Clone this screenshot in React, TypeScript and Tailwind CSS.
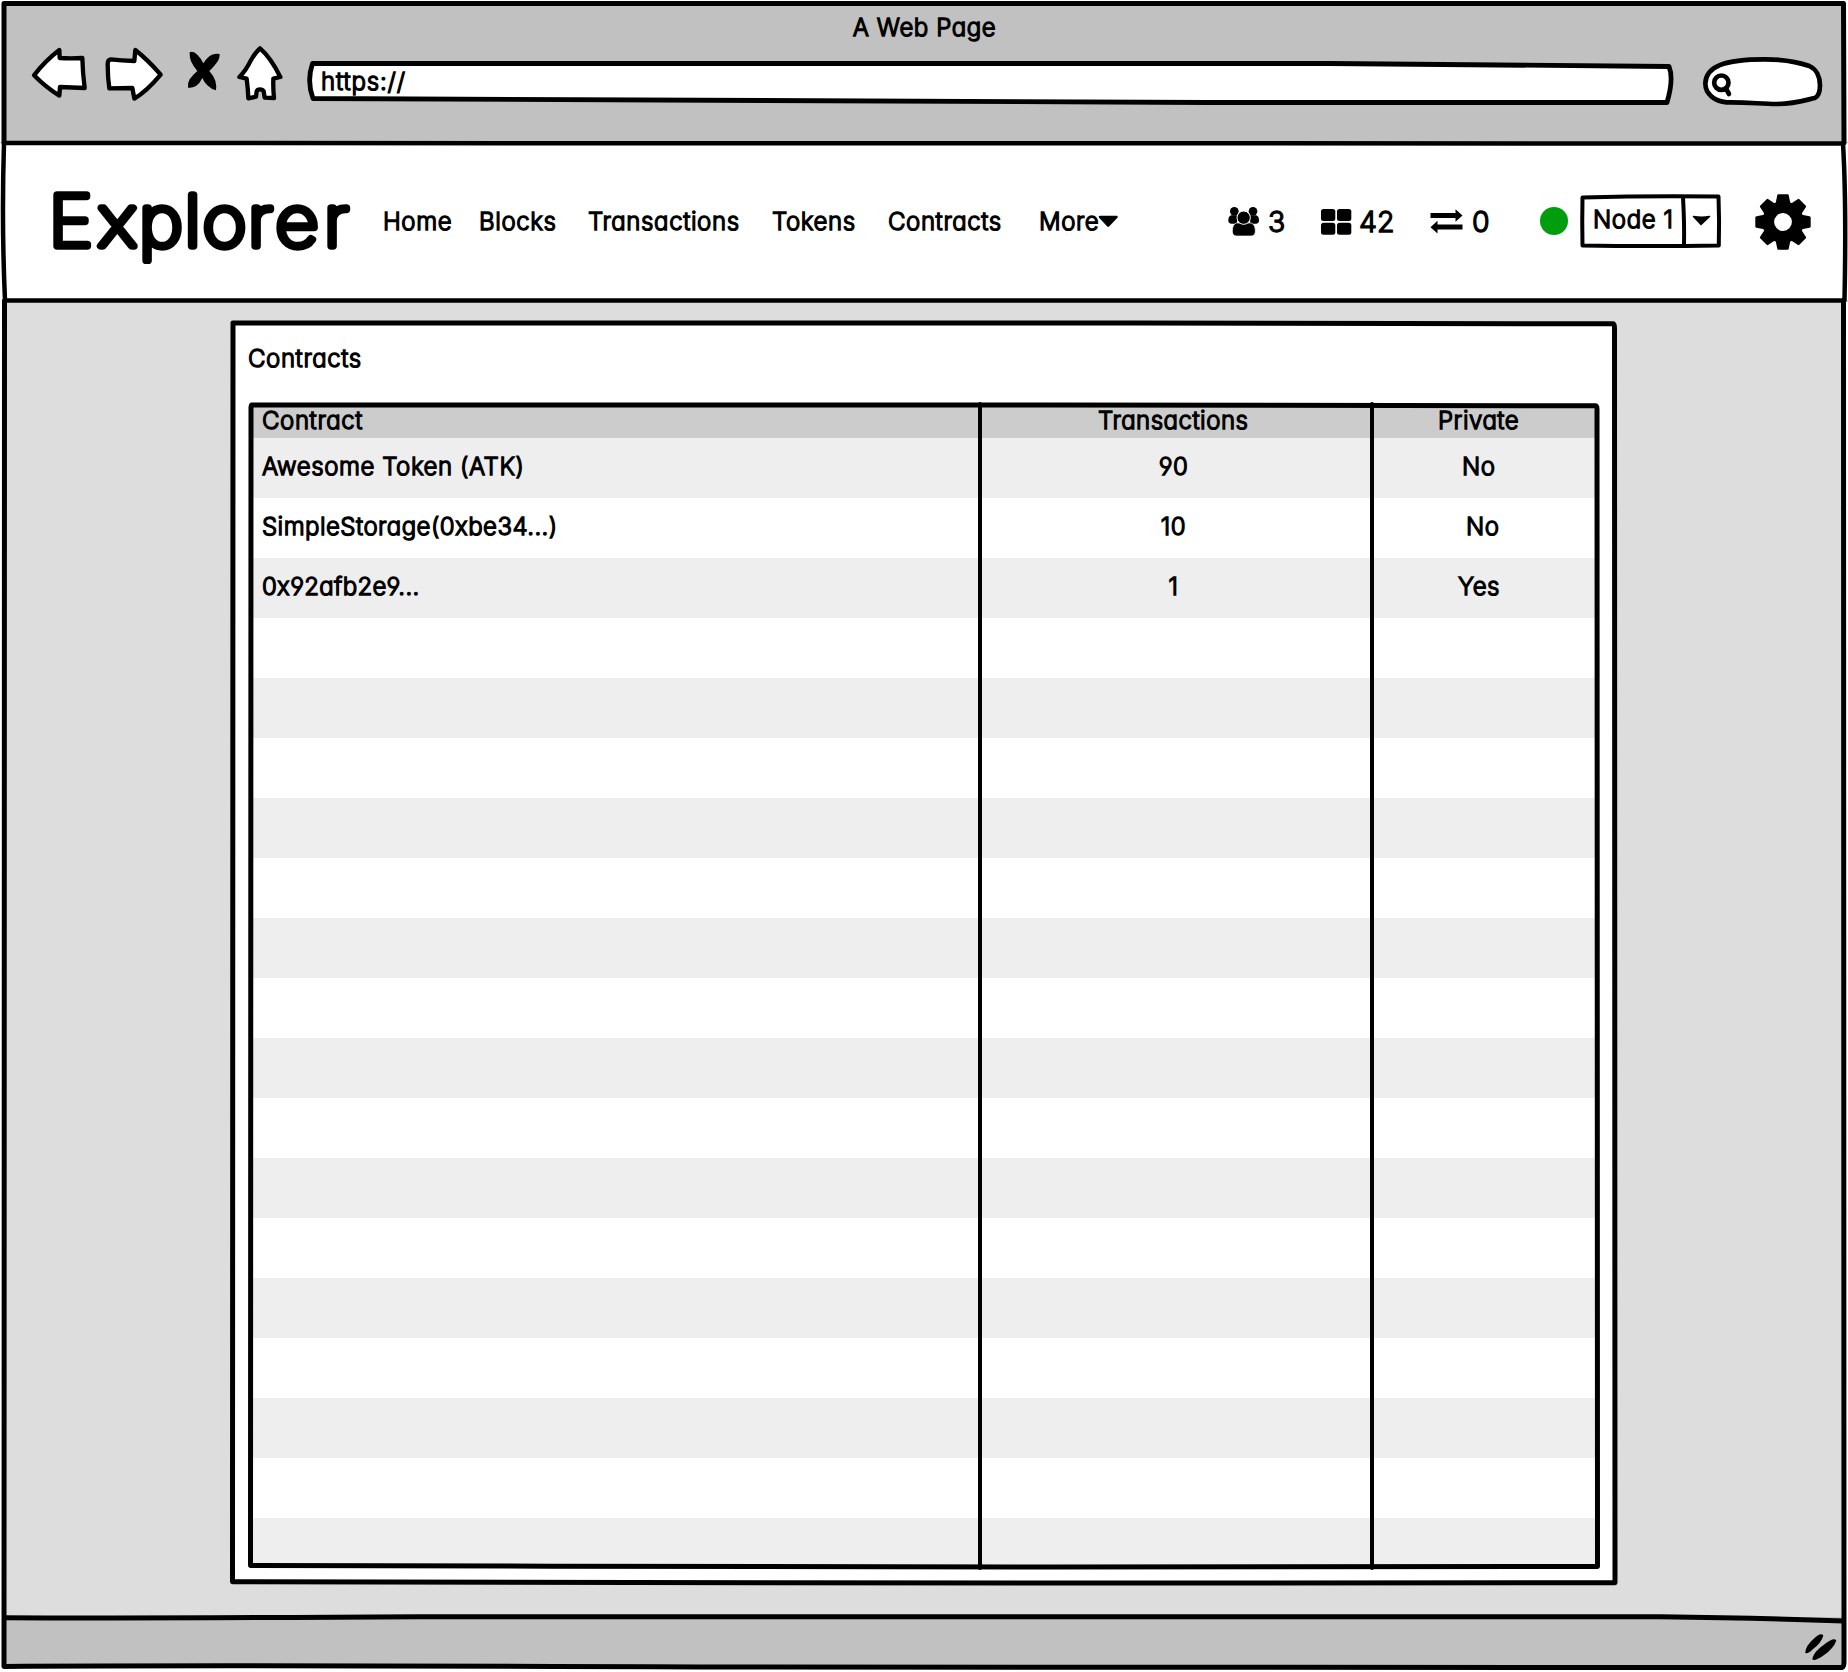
import type { ReactNode } from "react";

/** Hand-drawn line art that overlays the element it is placed in. */
function Sketch({ w, h, children }: { w: number; h: number; children: ReactNode }) {
  return (
    <svg
      className="pointer-events-none absolute top-0 left-0 overflow-visible"
      width={w}
      height={h}
      viewBox={`0 0 ${w} ${h}`}
      fill="none"
      stroke="#000"
      strokeWidth="5"
      strokeLinejoin="round"
      strokeLinecap="round"
    >
      {children}
    </svg>
  );
}

function BackIcon() {
  return (
    <svg className="ml-[30px] mt-[46px] shrink-0" width="58" height="54" viewBox="90 138 174 162" fill="#fff" stroke="#000" strokeWidth="13" strokeLinejoin="round">
      <path d="M102 226Q136 182 178 150L179 174Q212 176 247 174Q248 218 254 264L180 261L178 287Q140 264 102 226Z" />
    </svg>
  );
}

function ForwardIcon() {
  return (
    <svg className="ml-[16px] mt-[46px] shrink-0" width="60" height="56" viewBox="312 138 180 168" fill="#fff" stroke="#000" strokeWidth="13" strokeLinejoin="round">
      <path d="M482 224Q446 182 406 150L403 183Q364 182 332 178Q323 179 323 192Q323 232 328 265L397 264L403 296Q440 274 482 224Z" />
    </svg>
  );
}

function StopIcon() {
  return (
    <svg className="ml-[23px] mt-[50px] shrink-0" width="34" height="42" viewBox="561 150 102 126">
      <path
        d="M569 157Q580 152 592 164Q604 176 610 190Q622 170 636 164Q648 160 659 162Q659 178 649 190Q638 204 628 213Q641 228 646 242Q650 256 648 271Q634 268 622 256Q612 246 607 234Q600 250 588 258Q576 265 564 263Q562 250 569 238Q579 224 592 213Q579 198 573 184Q568 170 569 157Z"
        fill="#000"
      />
    </svg>
  );
}

function HomeIcon() {
  return (
    <svg className="ml-[14px] mt-[44px] shrink-0" width="50" height="58" viewBox="705 132 150 174" fill="#fff" stroke="#000" strokeWidth="13" strokeLinejoin="round">
      <path d="M780 145Q812 172 841 231L820 236Q819 266 822 294L794 293L791 274Q788 268 780 268Q772 268 770 274L768 290L745 295Q744 266 740 236L718 231Q738 212 752 182Q764 160 780 145Z" />
    </svg>
  );
}

function AddressBar() {
  return (
    <div className="relative ml-[23px] mt-[61px] h-[44px] w-[1366px] shrink-0">
      <Sketch w={1366} h={44}>
        <path d="M4.500 2.500L1022 2.500L1361 5.500Q1366 18 1359 41.500L900 41.500L5 37.500Q-1.500 20 4.500 2.500Z" fill="#fff" strokeWidth="4.800" />
      </Sketch>
      <div className="relative pl-[13px] leading-[41px] tracking-[0.85px]">https://</div>
    </div>
  );
}

function SearchBox() {
  return (
    <svg className="ml-[27px] mt-[54px] shrink-0" width="124" height="54" viewBox="1083 162 372 162" fill="#fff" stroke="#000" strokeWidth="14" strokeLinejoin="round" strokeLinecap="round">
      <path d="M1096 250C1098 200 1150 178 1275 178C1340 178 1380 188 1408 198C1430 208 1440 232 1440 256C1440 280 1434 290 1424 294C1390 302 1360 312 1310 312C1260 312 1230 306 1160 307C1125 303 1096 284 1096 250Z" />
      <path d="M1157 264L1167 282" />
      <circle cx="1144" cy="248" r="21.500" />
    </svg>
  );
}

function Chrome() {
  return (
    <header className="flex h-[143px] flex-col bg-[#c1c1c1]">
      <div className="-mb-[53px] h-[53px] pt-[2px] pl-px text-center leading-[51px] tracking-[0.55px]">A Web Page</div>
      <div className="flex">
        <BackIcon />
        <ForwardIcon />
        <StopIcon />
        <HomeIcon />
        <AddressBar />
        <SearchBox />
      </div>
    </header>
  );
}

function UsersIcon() {
  return (
    <svg width="32" height="30" viewBox="83 84 96 90" fill="#000">
      <circle cx="102" cy="97" r="13" />
      <circle cx="158" cy="97" r="13" />
      <path d="M92 109H112L110 134H92Q84 134 84 124Q84 112 92 109Z" />
      <path d="M168 109H148L150 134H168Q176 134 176 124Q176 112 168 109Z" />
      <path d="M108 132H152Q165 136 165 156Q165 171 152 171H109Q96 171 96 156Q96 136 108 132Z" stroke="#fff" strokeWidth="2" />
      <circle cx="130" cy="116" r="20" stroke="#fff" strokeWidth="3" />
    </svg>
  );
}

function BlocksIcon() {
  return (
    <svg width="31" height="26" viewBox="0 0 31 26" fill="#000">
      <rect x="0" y="0" width="14.300" height="12" rx="2.500" />
      <rect x="16" y="0" width="14.300" height="12" rx="2.500" />
      <rect x="0" y="13.800" width="14.300" height="12" rx="2.500" />
      <rect x="16" y="13.800" width="14.300" height="12" rx="2.500" />
    </svg>
  );
}

function TransferIcon() {
  return (
    <svg width="33" height="25" viewBox="0 0 33 25" fill="#000">
      <path d="M0.500 4H25.500V0.200L32.500 6.500L25.500 12.800V9H0.500Z" />
      <path d="M32.500 15.500H7.500V11.800L0.500 18.200L7.500 24.600V20.500H32.500Z" />
    </svg>
  );
}

function GearIcon() {
  const teeth = [0, 45, 90, 135, 180, 225, 270, 315];
  return (
    <svg className="ml-[33px] shrink-0" width="56" height="56" viewBox="-28 -28 56 56">
      <circle r="14.800" fill="none" stroke="#000" strokeWidth="11.800" />
      {teeth.map((a) => (
        <path key={a} d="M-4.600 -27.700H4.600Q5.600 -27.700 5.800 -26.500L7.600 -17.500H-7.600L-5.800 -26.500Q-5.600 -27.700 -4.600 -27.700Z" transform={`rotate(${a})`} />
      ))}
    </svg>
  );
}

function NodeSelect() {
  return (
    <div className="relative ml-[12px] -mt-[2px] flex h-[54px] w-[142px] shrink-0">
      <div className="w-[104px] pl-[13px] leading-[51px] tracking-[0.6px]">Node 1</div>
      <Sketch w={142} h={54}>
        <path d="M2.500 3.500Q70 1.500 138.500 2.500Q139.500 26 138.800 51.500Q70 52.500 2.500 51.500Q2 26 2.500 3.500Z" strokeWidth="4" />
        <path d="M103 3Q104.500 30 104 51" strokeWidth="4" />
        <path d="M113.500 22.500Q122 24 129.500 22.500L121 30.500Z" fill="#000" strokeWidth="1.500" />
      </Sketch>
    </div>
  );
}

function Nav() {
  return (
    <nav className="relative flex h-[157px] items-center bg-white">
      <svg className="ml-[48px] h-[100px] w-[310px] shrink-0 overflow-visible">
        <text
          x="0.6 46.8 84.3 126.3 143.2 185.2 210.6 255.500"
          y="73.800"
          fontSize="69.500"
          fontWeight="100"
          stroke="#000"
          strokeWidth="7.300"
          strokeLinejoin="round"
          transform="scale(1.08 1)"
        >
          Explorer
        </text>
      </svg>
      <div className="flex shrink-0 items-center leading-[30px] tracking-[0.6px]">
        <a className="ml-[25px] w-[96px]">Home</a>
        <a className="w-[109px]">Blocks</a>
        <a className="w-[184px]">Transactions</a>
        <a className="w-[116px]">Tokens</a>
        <a className="w-[151px]">Contracts</a>
        <a className="flex w-[189px] items-center">
          More
          <svg className="-ml-px" width="21" height="13" viewBox="0 0 21 13">
            <path d="M2 2H18.500L10.200 10.700Z" fill="#000" stroke="#000" strokeWidth="2.500" strokeLinejoin="round" />
          </svg>
        </a>
      </div>
      <div className="flex shrink-0 items-center text-[28.500px] leading-[30px] tracking-[0.2px]">
        <span className="flex w-[93px] items-center gap-[8px]"><UsersIcon />3</span>
        <span className="flex w-[109px] items-center gap-[7px]"><BlocksIcon />42</span>
        <span className="flex w-[110px] items-center gap-[9px]"><TransferIcon />0</span>
      </div>
      <span className="-mt-[2px] size-[28px] shrink-0 rounded-full bg-[#009e0f]" />
      <NodeSelect />
      <GearIcon />
      <Sketch w={1848} h={157}>
        <path d="M4 0Q600 -1 1843 0.500Q1846.500 60 1844.500 157.500Q900 158.500 5 157.500Q1.500 80 4 0Z" strokeWidth="4.500" />
      </Sketch>
    </nav>
  );
}

const rows = [
  { name: "Awesome Token (ATK)", count: "90", secret: "No", spacing: "tracking-[0.55px]", shift: "pl-[90px]" },
  { name: "SimpleStorage(0xbe34...)", count: "10", secret: "No", spacing: "tracking-[0.45px]", shift: "pl-[94px]" },
  { name: "0x92afb2e9...", count: "1", secret: "Yes", spacing: "tracking-[0.3px]", shift: "pl-[86px]" },
];

function ContractsTable() {
  return (
    <div className="relative ml-[18px] mt-[30px] h-[1162px] w-[1346px]">
      <div className="grid h-[33px] grid-cols-[729px_392px_225px] bg-[#ccc] leading-[31px]">
        <div className="pl-[11px] tracking-[0.6px]">Contract</div>
        <div className="pl-[118px]">Transactions</div>
        <div className="pl-[66px]">Private</div>
      </div>
      <div className="h-[1128px] overflow-hidden">
        {Array.from({ length: 19 }, (_, i) => (
          <div
            key={i}
            className="grid h-[60px] grid-cols-[729px_392px_225px] leading-[57px] odd:bg-[#eee] even:bg-white"
          >
            {rows[i] && (
              <>
                <div className={`pl-[11px] ${rows[i].spacing}`}>{rows[i].name}</div>
                <div className="pr-[5px] text-center">{rows[i].count}</div>
                <div className={rows[i].shift}>{rows[i].secret}</div>
              </>
            )}
          </div>
        ))}
      </div>
      <Sketch w={1346} h={1162}>
        <path d="M0.500 0L800 0L1344.500 0.800Q1346 1 1346 4L1346.500 1161.500L800 1162L300 1161.200L-0.500 1160.500L0 2Z" />
        <path d="M729 -1V1163M1121 -1V1163" strokeWidth="4" />
      </Sketch>
    </div>
  );
}

function ContractsCard() {
  return (
    <main className="flex h-[1317px] justify-center bg-[#ddd] pt-[23px]">
      <section className="relative h-[1259px] w-[1382px] bg-white pt-[20px]">
        <h1 className="pl-[15px] leading-[32px] tracking-[0.6px]">Contracts</h1>
        <ContractsTable />
        <Sketch w={1382} h={1259}>
          <path d="M0 0L900 0L1380 0.800Q1381.500 1 1381.500 5L1382 1259.800L900 1260L400 1259.500L-0.500 1258.800L0 0Z" />
        </Sketch>
      </section>
    </main>
  );
}

function StatusBar() {
  return (
    <footer className="relative h-[50px] bg-[#c1c1c1]">
      <Sketch w={1848} h={50}>
        <path d="M4 0.800Q150 1.500 420 -0.300L1660 -0.300Q1760 1 1844 4" />
        <path d="M1806 35.500Q1806.500 29 1814 22.500Q1820 16.500 1822.500 18.500Q1821 25 1812 32Q1808 36 1806 35.500ZM1813 42Q1814.500 35 1824 28.500Q1833 21.500 1835.500 23.500Q1833 31 1823 38Q1815 43.500 1813 42Z" fill="#000" strokeWidth="1.500" />
      </Sketch>
    </footer>
  );
}

export default function App() {
  return (
    <div className="relative flex h-[1672px] w-[1848px] flex-col overflow-hidden bg-white font-['Inter',sans-serif] text-[24px] font-light whitespace-nowrap text-black tracking-[0.5px] [font-feature-settings:'cv11','cv03','cv04'] [-webkit-text-stroke:1.3px_black]">
      <div className="flex flex-col overflow-hidden rounded-t-[4px]">
        <Chrome />
        <Nav />
        <ContractsCard />
        <StatusBar />
      </div>
      <Sketch w={1848} h={1672}>
        <path d="M0 0H1848V4H0ZM0 0H4V142H0ZM0 300H4V1668H0ZM1844.500 0H1848V142H1844.500ZM1844.500 302H1848V1668H1844.500Z" fill="#fff" stroke="none" />
        <path d="M4 3.500H1843.500L1844 143M4 3.500L4 143M4.500 301L4 1666.500Q200 1665 700 1667Q1300 1668 1660 1667.500L1842 1667.500Q1844 1667 1844 1662L1843.500 301" />
      </Sketch>
    </div>
  );
}
